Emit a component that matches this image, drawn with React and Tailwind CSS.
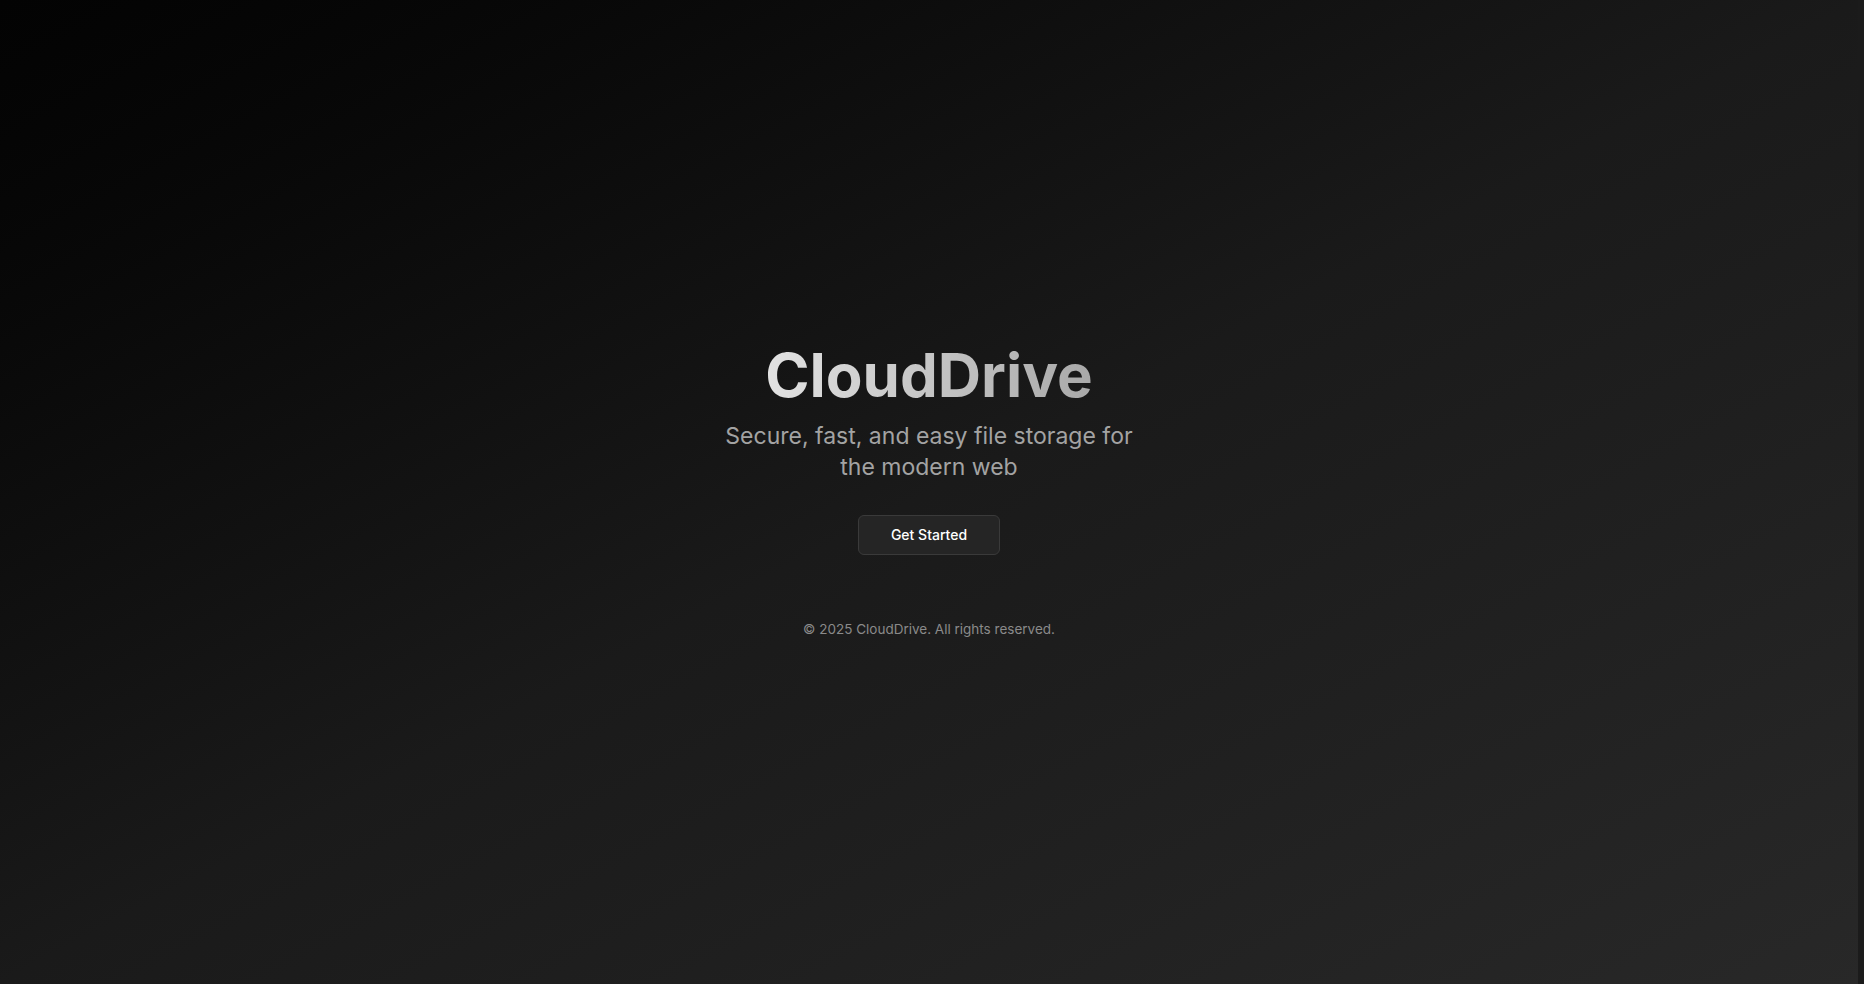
import React from "react";

const App = () => {
  return (
    <div
      className="min-h-screen w-full flex bg-gradient-to-br from-[#030303] via-[#1a1a1a] to-[#282828] text-white"
      style={{ fontFamily: "Inter, 'Noto Sans', sans-serif" }}
    >
      <main className="flex-1 flex flex-col items-center justify-center">
        <h1 className="text-6xl leading-none font-bold bg-gradient-to-r from-[#e2e2e2] to-[#a9a9a9] bg-clip-text text-transparent">
          CloudDrive
        </h1>
        <p className="mt-4 max-w-md text-center text-[23px] leading-[31px] text-[#a3a3a3]">
          Secure, fast, and easy file storage for the modern web
        </p>
        <button className="mt-8 h-10 px-8 rounded-md bg-[#252525] border border-[#3a3a3a] text-sm font-medium text-white">
          Get Started
        </button>
        <footer className="mt-16 text-[13.5px] leading-5 text-[#8a8a8a]">
          © 2025 CloudDrive. All rights reserved.
        </footer>
      </main>
      <div className="w-[6px] bg-[#1b1b1b]" />
    </div>
  );
};

export default App;
